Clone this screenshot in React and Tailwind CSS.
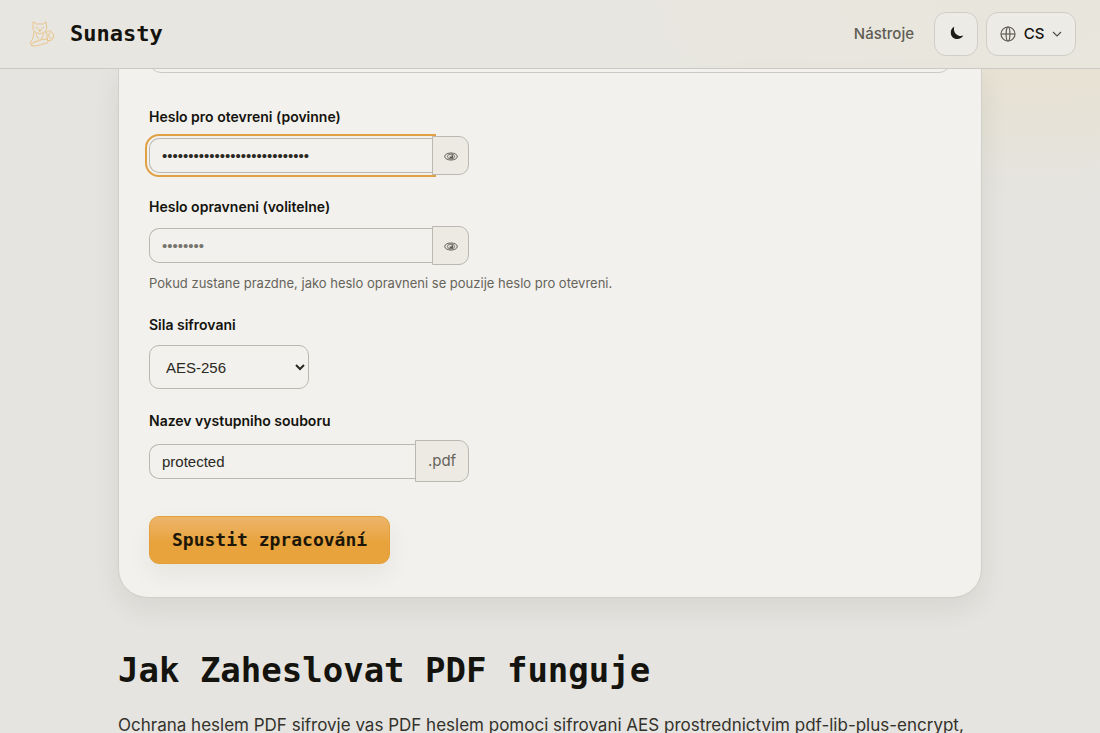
import React from "react";

function CatLogo() {
  return (
    <svg viewBox="0 0 28 28" className="size-7" fill="none" stroke="#e9bf80" strokeWidth="0.9" strokeLinejoin="round" strokeLinecap="round" aria-hidden="true">
      <path d="M5.500 1.800 8.800 4.200q3-.7 6 0l3.200-2.400.6 5.400c.5 3.200-1.600 5.800-6.800 6.400-5.200-.6-7.300-3.200-6.800-6.400Z" />
      <path d="M7.800 7.600l2 .6M15.800 7.600l-2 .6M10.500 10.300l1.300 1 1.300-1M11.800 9.300v2" />
      <path d="M6 11.800C5 14.500 5.800 17 4.200 19.500 2.300 21.500 2 25 4.300 25.800c2.700.6 5.200-.2 8-1l6.500-1.800c2-.7 2-3.200.2-3.800-2.500-.5-5 .5-7.500 1.200l-5.300 1.800" />
      <path d="M4.300 25.800c-1.200-1.200-.4-3.200 1.900-3.600" />
      <path d="M17.800 11.500c1.500 2.200 1.700 5 1.200 7.700" />
      <path d="M18.200 12.500c1.800-2.200 4.500-2 5.800-.2 2 1.700 2.200 5 .6 6.700-1.500 1.800-3.800 2-5.600 1.200M22.500 12c-1.800 1.200-2.400 3.500-1.300 5.300.8 1 2.200 1.200 3.400.8" />
      <path d="M8.300 14.200c.3 2 1.200 3.800 2.700 5.200M15.500 13.800c-.3 2.200-1.200 4-2.500 5.200" />
    </svg>
  );
}

function EyeIcon() {
  return (
    <svg viewBox="0 0 14 10" className="h-2.5 w-3.5" fill="none" stroke="#5a584f" aria-hidden="true">
      <ellipse cx="7" cy="5.500" rx="6.300" ry="3.500" strokeWidth="1" />
      <ellipse cx="7" cy="5.500" rx="3.600" ry="2.300" strokeWidth="0.8" />
      <path d="M7.600 3.800v1.700H5.300a2 1.800 0 1 0 2.300-1.700Z" fill="#5a584f" stroke="none" />
    </svg>
  );
}

function GlobeIcon() {
  return (
    <svg viewBox="0 0 16 16" className="size-4" fill="none" stroke="#5f5d53" strokeWidth="1.200" aria-hidden="true">
      <circle cx="8" cy="8" r="7" />
      <ellipse cx="8" cy="8" rx="1.900" ry="7" />
      <path d="M1 8h14" />
    </svg>
  );
}

function MoonIcon() {
  return (
    <svg viewBox="0 0 14 14" className="mb-0.5 ml-0.5 size-3.5" fill="#1c1b16" aria-hidden="true">
      <path d="M4.200.8C1.800 2 .8 4.200.8 6.700c0 3.600 2.700 6.300 6.400 6.300 2.700 0 4.900-1.200 6.100-3.400-1.500.6-3.400.6-5.100-.1C5 8.200 3.200 4.600 4.200.8Z" />
    </svg>
  );
}

const labelClass = "block text-sm leading-5 font-semibold text-[#14130e]";
const inputClass =
  "h-[35px] min-w-0 flex-1 rounded-l-[10px] border border-r-0 border-[#b9b8b1] bg-[#f2f1ed] px-3 font-['Liberation_Sans',Arial,sans-serif] text-[15px] text-[#2a2922] placeholder:text-[#77756d]";
const addonClass =
  "relative flex items-center justify-center rounded-r-[10px] border border-[#b9b8b1] bg-[#edeae4]";

function PasswordField({ id, label, focused, hint, ...rest }) {
  return (
    <div>
      <label htmlFor={id} className={labelClass}>{label}</label>
      <div className="mt-[9px] flex max-w-80 items-center">
        <input
          id={id}
          type="password"
          autoComplete="off"
          className={`${inputClass} ${focused ? "outline-2 outline-offset-2 outline-[#e0a145]" : ""}`}
          {...rest}
        />
        <button type="button" aria-label="Zobrazit heslo" className={`${addonClass} h-[39px] w-[37px]`}>
          <EyeIcon />
        </button>
      </div>
      {hint && <p className="mt-2 text-[13px] leading-5 text-[#66645b]">{hint}</p>}
    </div>
  );
}

export default function App() {
  return (
    <div className="min-h-screen bg-[#e5e4e0] bg-[radial-gradient(ellipse_440px_200px_at_94%_0px,#e8e1cd_0%,#e6e2d6_55%,#e5e4e000_100%)] font-[Inter,sans-serif] text-[#14130e]">
      <header className="relative z-10 flex h-[69px] items-center justify-between border-b border-[#cbcac4] bg-[#e8e7e0]/75 px-6">
        <a href="#" className="flex items-center gap-[14px] pl-1 font-['DejaVu_Sans_Mono',monospace] text-[22px] leading-8 font-bold">
          <CatLogo />
          Sunasty
        </a>
        <nav className="flex items-center gap-2">
          <a href="#" className="mr-3 text-[15px] font-medium text-[#5f5d53]">Nástroje</a>
          <button type="button" aria-label="Tmavý režim" className="flex size-11 items-center justify-center rounded-xl border border-[#cfcdc6] bg-[#edebe5]">
            <MoonIcon />
          </button>
          <button type="button" className="flex h-11 w-[90px] items-center justify-center gap-2 rounded-xl border border-[#cfcdc6] bg-[#edebe5] text-[15px] font-medium">
            <GlobeIcon />
            CS
            <svg viewBox="0 0 10 6" className="h-1.5 w-2.5" fill="none" stroke="#4a4941" strokeWidth="1.100" aria-hidden="true">
              <path d="m1 1 4 4 4-4" />
            </svg>
          </button>
        </nav>
      </header>

      <main className="mx-auto max-w-[864px]">
        <section className="rounded-b-[29px] border border-t-0 border-[#d0cfc9] bg-[#f2f1ed] px-[30px] pb-[33px] shadow-[0_10px_28px_rgba(40,38,25,0.08)]">
          <div className="flex h-1 items-end overflow-hidden">
            <div className="h-10 w-full shrink-0 rounded-xl border border-[#cbcac4]" />
          </div>
          <form className="mt-[34px]" onSubmit={(e) => e.preventDefault()}>
            <div className="flex flex-col gap-[22px]">
              <PasswordField
                id="open-password"
                label="Heslo pro otevreni (povinne)"
                defaultValue="correct-horse-battery-staple"
                focused
              />
              <PasswordField
                id="owner-password"
                label="Heslo opravneni (volitelne)"
                placeholder="••••••••"
                hint="Pokud zustane prazdne, jako heslo opravneni se pouzije heslo pro otevreni."
              />
              <div>
                <label htmlFor="strength" className={labelClass}>Sila sifrovani</label>
                <select
                  id="strength"
                  className="mt-2.5 block h-11 w-40 rounded-[10px] border border-[#b9b8b1] bg-[#f2f1ed] px-3 font-['Liberation_Sans',Arial,sans-serif] text-[15px] text-[#2a2922]"
                >
                  <option>AES-256</option>
                </select>
              </div>
              <div>
                <label htmlFor="output-name" className={labelClass}>Nazev vystupniho souboru</label>
                <div className="mt-[9px] flex max-w-80 items-center">
                  <input id="output-name" type="text" defaultValue="protected" className={inputClass} />
                  <span className={`${addonClass} h-[42px] w-[54px] text-[15px] text-[#66645b]`}>.pdf</span>
                </div>
              </div>
            </div>
            <button
              type="submit"
              className="mt-[34px] block h-12 rounded-[10px] border border-[#e3a03a] bg-linear-to-b from-[#edb56a] to-[#e8a33c] to-55% px-[22px] font-['DejaVu_Sans_Mono',monospace] text-lg leading-6 font-bold text-[#1c1608] shadow-[0_10px_24px_rgba(40,38,25,0.06)]"
            >
              Spustit zpracování
            </button>
          </form>
        </section>

        <section className="pt-[52px]">
          <h2 className="font-['DejaVu_Sans_Mono',monospace] text-[34px] leading-10 font-bold">Jak Zaheslovat PDF funguje</h2>
          <p className="mt-[21px] text-[17px] leading-7 text-[#33322b]">
            Ochrana heslem PDF sifrovje vas PDF heslem pomoci sifrovani AES prostrednictvim pdf-lib-plus-encrypt,
          </p>
        </section>
      </main>
    </div>
  );
}
